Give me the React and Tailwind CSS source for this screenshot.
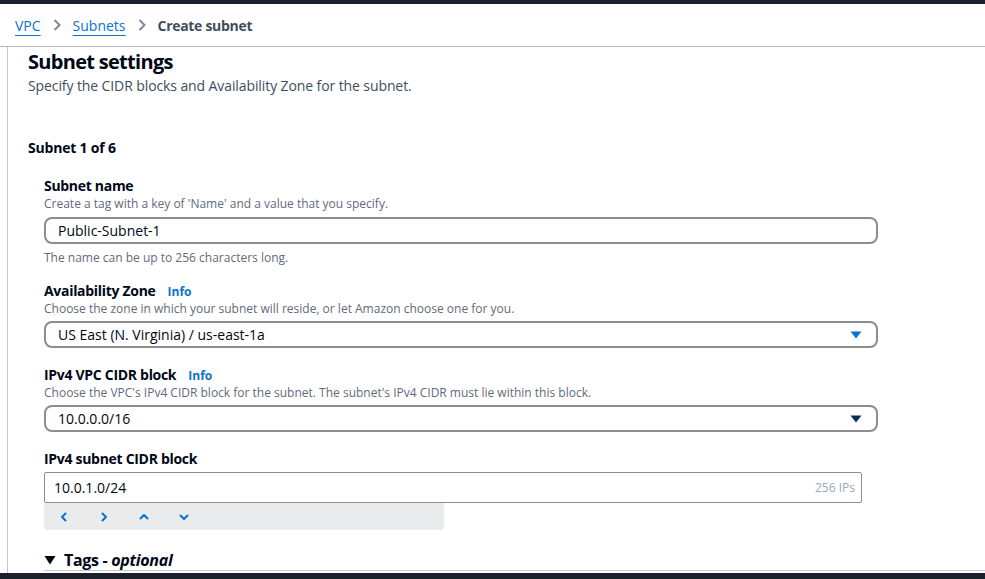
const Caret = ({ color }) => (
  <svg width="12" height="8" viewBox="0 0 12 8" className="shrink-0">
    <path d="M0.5 0.5h11L6 7.5z" fill={color} />
  </svg>
);

const Chevron = ({ d }) => (
  <svg width="12" height="12" viewBox="0 0 12 12" className="text-[#0972d3]">
    <path d={d} fill="none" stroke="currentColor" strokeWidth="2" strokeLinecap="round" strokeLinejoin="round" />
  </svg>
);

const Crumb = () => (
  <svg width="10" height="14" viewBox="0 0 10 14" className="mx-[11px]">
    <path d="M2.5 2l5 5-5 5" fill="none" stroke="#7d8998" strokeWidth="2" />
  </svg>
);

const Label = ({ children, info }) => (
  <div className="flex items-baseline h-[20px] pt-[2px] text-[14px] leading-[17px] font-bold tracking-[-0.3px] text-[#000716]">
    {children}
    {info && <span className="ml-[12px] text-[12px] leading-[14px] font-bold tracking-normal text-[#0972d3]">Info</span>}
  </div>
);

const Desc = ({ children, className = '' }) => (
  <div className={`h-[16px] pt-[1px] leading-[15px] text-[12px] text-[#5f6b7a] ${className}`}>{children}</div>
);

const Select = ({ value, caret }) => (
  <div className="mt-[5px] w-[834px] h-[27px] border-2 border-[#8c8c94] rounded-[8px] flex items-center justify-between pl-[12px] pr-[14px] text-[14px] text-[#000716]">
    <span>{value}</span>
    <Caret color={caret} />
  </div>
);

export default function App() {
  return (
    <div className="w-[985px] h-[579px] overflow-hidden flex flex-col bg-white font-['Open_Sans',sans-serif] text-[#000716]">
      <div className="h-[4px] bg-[#1b202b] shrink-0" />
      <div className="h-[43px] shrink-0 border-b border-[#b4b4bb] flex items-center pl-[15px] text-[14px]">
        <span className="text-[#0972d3] underline underline-offset-[4px]">VPC</span>
        <Crumb />
        <span className="text-[#0972d3] underline underline-offset-[4px]">Subnets</span>
        <Crumb />
        <span className="font-bold tracking-[-0.3px] text-[#414d5c]">Create subnet</span>
      </div>

      <div className="flex-1 min-h-0 flex">
        <div className="ml-[7px] border-l border-[#c6c6cd] flex-1 pl-[20px] pt-[3px]">
          <h2 className="text-[20px] leading-[24px] font-bold tracking-[-0.7px]">Subnet settings</h2>
          <p className="mt-[2px] text-[14px] leading-[20px] tracking-[-0.1px] text-[#414d5c]">
            Specify the CIDR blocks and Availability Zone for the subnet.
          </p>

          <div className="mt-[42px] text-[14px] leading-[20px] font-bold tracking-[-0.2px]">Subnet 1 of 6</div>

          <div className="pl-[16px]">
            <div className="mt-[17px]">
              <Label>Subnet name</Label>
              <Desc>Create a tag with a key of 'Name' and a value that you specify.</Desc>
              <div className="mt-[6px] w-[834px] h-[27px] border-2 border-[#8c8c94] rounded-[8px] flex items-center pl-[12px] text-[14px]">
                Public-Subnet-1
              </div>
              <Desc className="mt-[5px]">The name can be up to 256 characters long.</Desc>
            </div>

            <div className="mt-[15px]">
              <Label info>Availability Zone</Label>
              <Desc>Choose the zone in which your subnet will reside, or let Amazon choose one for you.</Desc>
              <Select value="US East (N. Virginia) / us-east-1a" caret="#0972d3" />
            </div>

            <div className="mt-[16px]">
              <Label info>IPv4 VPC CIDR block</Label>
              <Desc>Choose the VPC's IPv4 CIDR block for the subnet. The subnet's IPv4 CIDR must lie within this block.</Desc>
              <Select value="10.0.0.0/16" caret="#0b2a5c" />
            </div>

            <div className="mt-[16px]">
              <Label>IPv4 subnet CIDR block</Label>
              <div className="mt-[4px] w-[818px] h-[31px] border border-[#8c8c94] rounded-[2px] flex items-center justify-between pl-[9px] pr-[6px] text-[14px]">
                <span>10.0.1.0/24</span>
                <span className="text-[12px] text-[#9ba7b6]">256 IPs</span>
              </div>
              <div className="w-[400px] h-[27px] bg-[#e9ebed] rounded-b-[4px] flex items-center pl-[14px] gap-[28px]">
                <Chevron d="M7.5 2.5L4 6l3.5 3.5" />
                <Chevron d="M4.5 2.5L8 6l-3.5 3.5" />
                <Chevron d="M2.5 7.5L6 4l3.5 3.5" />
                <Chevron d="M2.5 4.5L6 8l3.5-3.5" />
              </div>
            </div>

            <div className="mt-[19px] border-b border-[#c6c6cd] flex items-center h-[22px]">
              <svg width="12" height="10" viewBox="0 0 12 10" className="mr-[8px]">
                <path d="M0.5 1h11L6 9.5z" fill="#000716" />
              </svg>
              <span className="text-[16px] font-bold tracking-[-0.3px]">Tags - <i>optional</i></span>
            </div>
          </div>
        </div>
      </div>
      <div className="h-[6px] bg-[#1b202b] shrink-0" />
    </div>
  );
}
